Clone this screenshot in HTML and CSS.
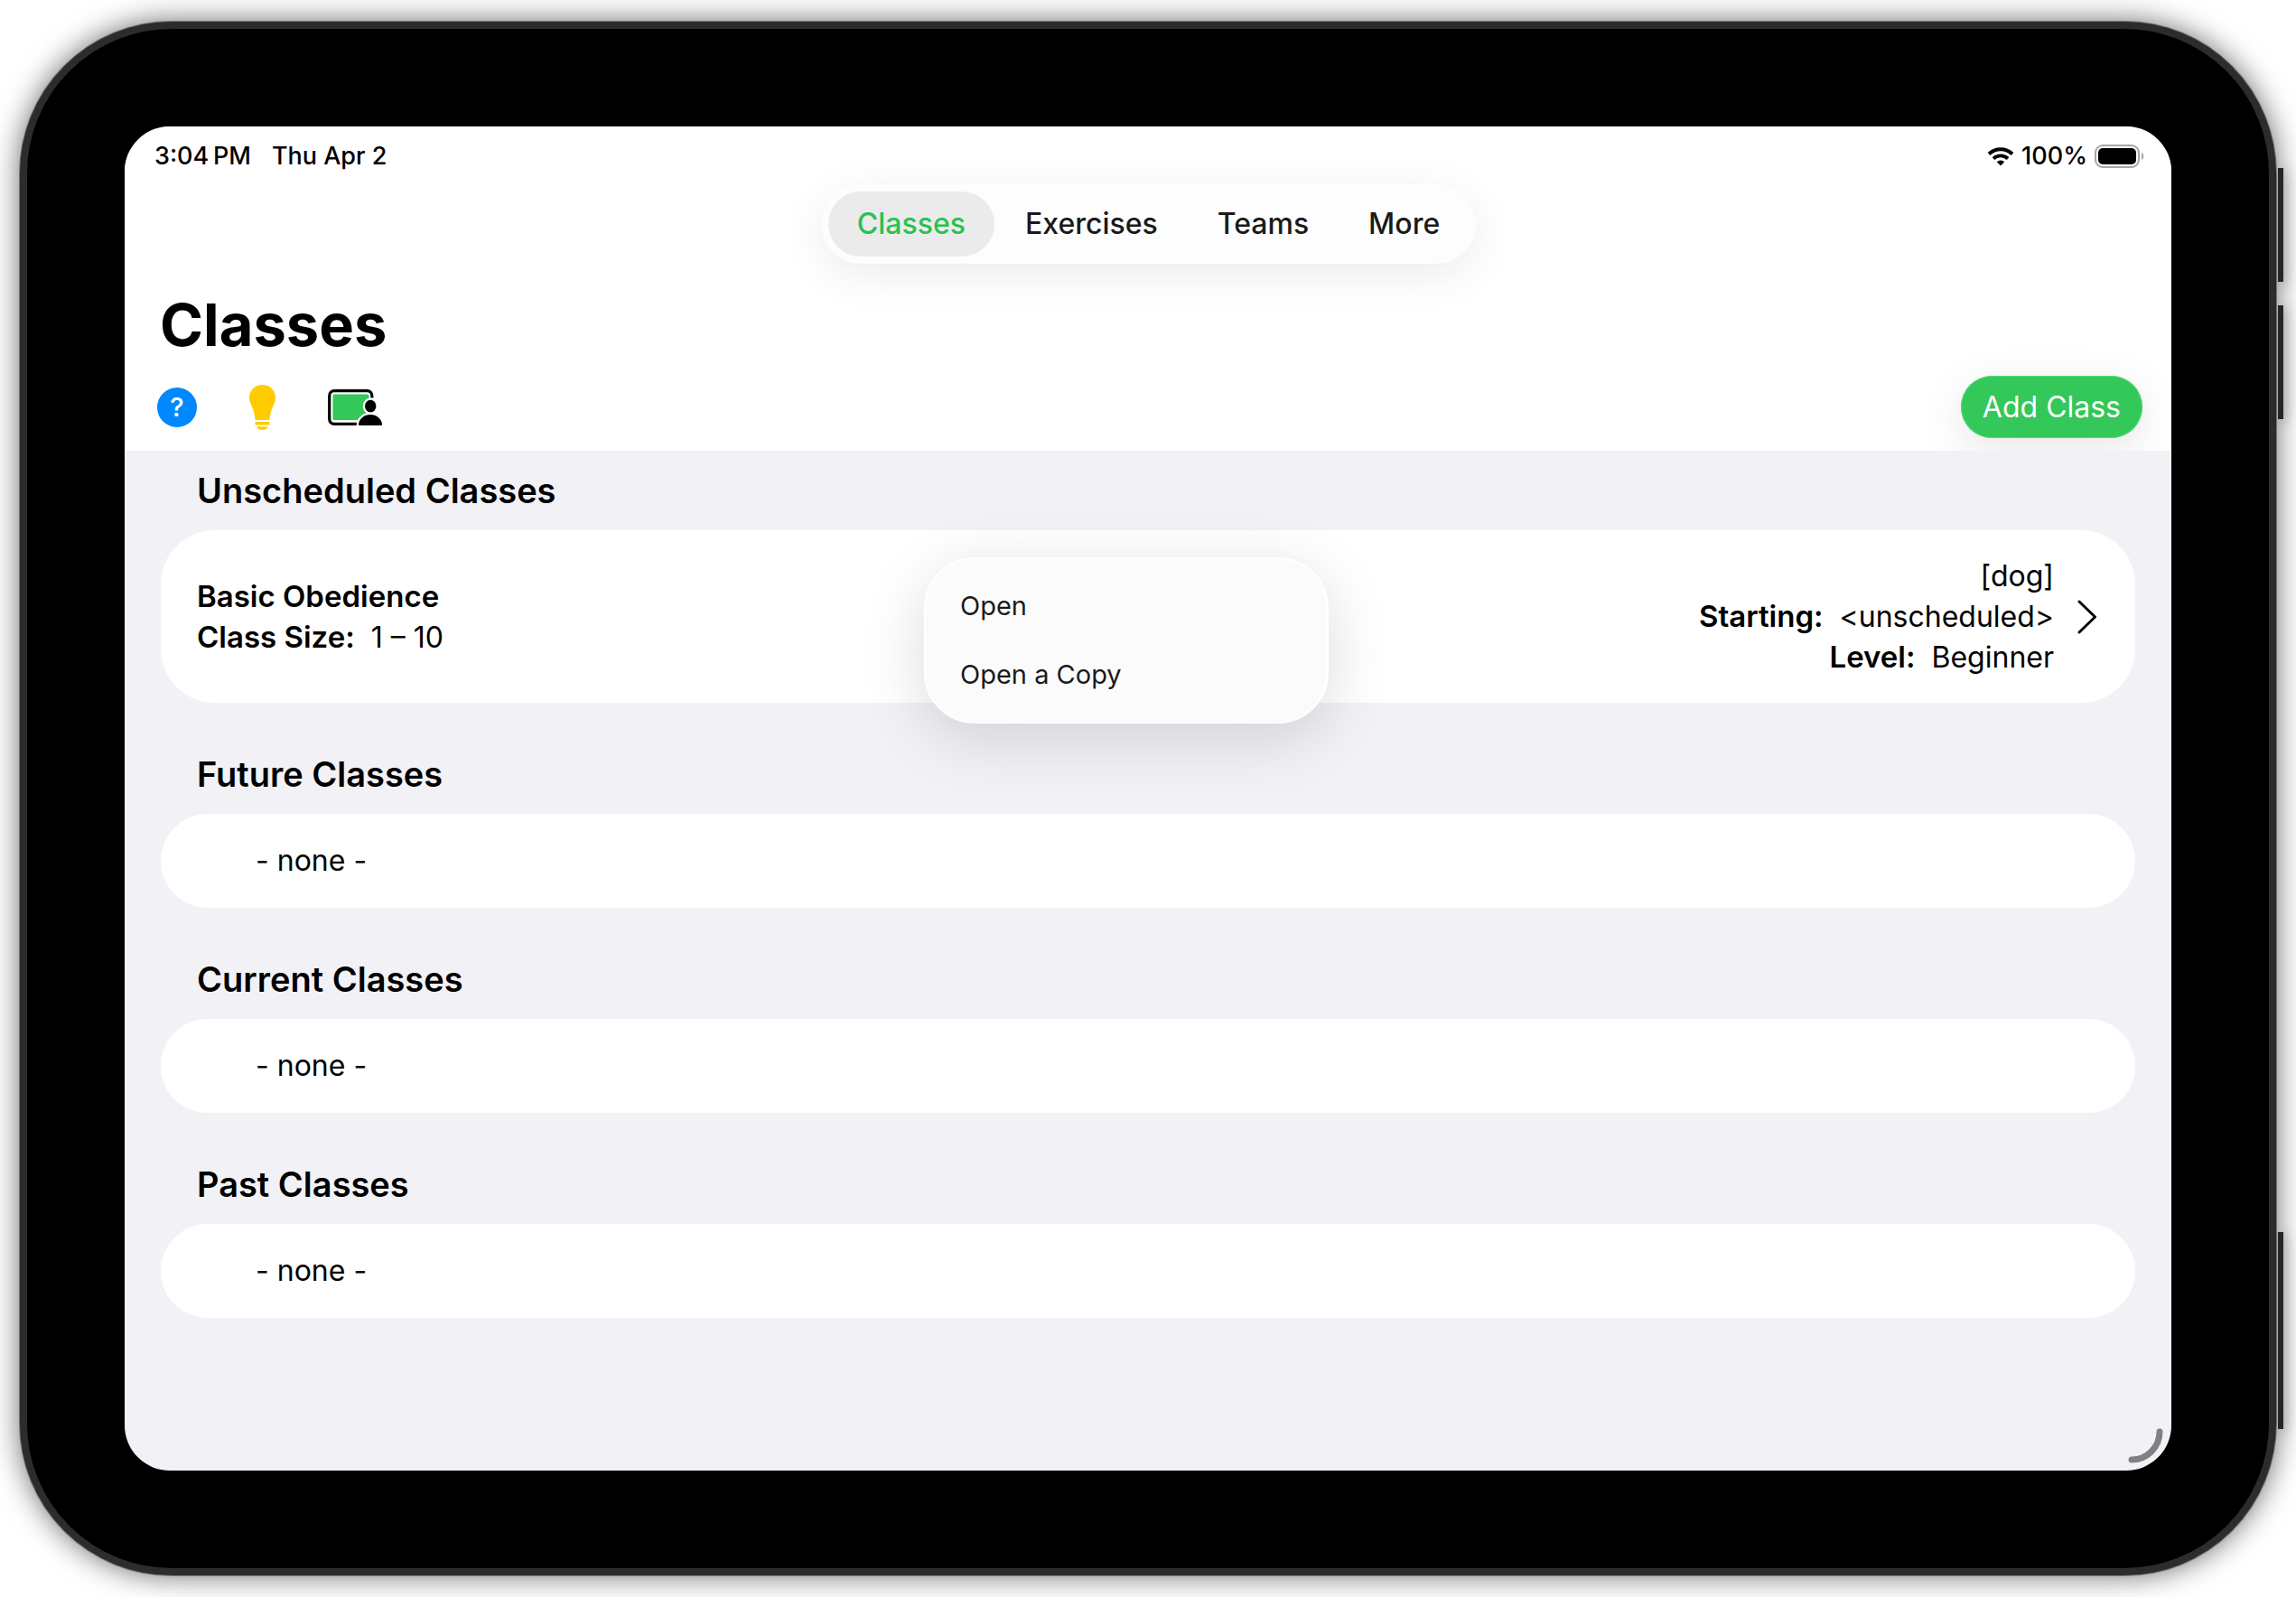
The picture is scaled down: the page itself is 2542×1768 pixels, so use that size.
FILE: index.html
```html
<!DOCTYPE html>
<html lang="en">
<head>
    <meta charset="UTF-8">
    <meta name="viewport" content="width=device-width, initial-scale=1.0">
    <title>Classes</title>
    <link rel="stylesheet" href="styles.css">
</head>
<body>
    <div class="device">
        <!-- Hardware buttons -->
        <span class="side-button volume-up"></span>
        <span class="side-button volume-down"></span>
        <span class="side-button power"></span>

        <div class="screen">
            <header class="header">
                <div class="status-bar">
                    <span>3:04&#8201;PM</span>
                    <span>Thu Apr 2</span>
                    <div class="status-right">
                        <svg class="wifi" viewBox="0 0 30 21" aria-hidden="true">
                            <path d="M2 7.5a18.5 18.5 0 0 1 26 0" fill="none" stroke="#000" stroke-width="4"/>
                            <path d="M7 12.7a11.5 11.5 0 0 1 16 0" fill="none" stroke="#000" stroke-width="3.8"/>
                            <path d="M15 20.5l-4.2-4.2a6 6 0 0 1 8.4 0z"/>
                        </svg>
                        <span>100%</span>
                        <svg class="battery" viewBox="0 0 56 26" aria-hidden="true">
                            <rect x="1" y="1" width="48" height="24" rx="8" fill="none" stroke="#a6a6a6" stroke-width="2"/>
                            <rect x="4" y="4" width="42" height="18" rx="5"/>
                            <path d="M52 9c3 1 3 7 0 8z" fill="#a6a6a6"/>
                        </svg>
                    </div>
                </div>

                <nav class="tabs">
                    <a class="tab active" href="#classes">Classes</a>
                    <a class="tab" href="#exercises">Exercises</a>
                    <a class="tab" href="#teams">Teams</a>
                    <a class="tab" href="#more">More</a>
                </nav>

                <h1>Classes</h1>

                <div class="toolbar">
                    <button class="icon-btn help" aria-label="Help">?</button>
                    <button class="icon-btn" aria-label="Tips">
                        <svg class="bulb" viewBox="0 0 29 50" fill="#ffcc02">
                            <path d="M14.5 0C22.6 0 29 6.2 29 14c0 8-5.600 11-6.600 25H6.600C5.600 25 0 22 0 14 0 6.200 6.400 0 14.500 0z"/>
                            <rect x="6.500" y="41" width="16" height="3.500" rx="1"/>
                            <path d="M8 46.200h13c-1 2.500-3.500 3.800-6.500 3.800S9 48.700 8 46.200z"/>
                        </svg>
                    </button>
                    <button class="icon-btn" aria-label="Present">
                        <svg class="present" viewBox="0 0 60 40">
                            <path d="M32 38.300H7a5.300 5.300 0 0 1-5.300-5.300V7A5.300 5.300 0 0 1 7 1.700h36.500a5.300 5.300 0 0 1 5.300 5.300v2.500" fill="none" stroke="#000" stroke-width="3.200"/>
                            <rect x="5.500" y="5.500" width="40" height="28.500" rx="1.500" fill="#34c759"/>
                            <g stroke="#fff" stroke-width="4.500" paint-order="stroke">
                                <ellipse cx="47.200" cy="18.700" rx="6.200" ry="6.900"/>
                                <path d="M35.500 40C34.500 40 34 39.500 34 38.500 34.500 33 40 28 47 28s12.500 5 13 10.500c0 1-.5 1.500-1.500 1.500z"/>
                            </g>
                        </svg>
                    </button>
                    <button class="add-btn">Add Class</button>
                </div>
            </header>

            <main class="content">
                <section>
                    <h2>Unscheduled Classes</h2>
                    <div class="card class-card">
                        <div class="class-info">
                            <p><strong>Basic Obedience</strong></p>
                            <p><strong>Class Size:</strong><span>1 – 10</span></p>
                        </div>
                        <div class="class-info details">
                            <p><span>[dog]</span></p>
                            <p><strong>Starting:</strong><span>&lt;unscheduled&gt;</span></p>
                            <p><strong>Level:</strong><span>Beginner</span></p>
                        </div>
                        <svg class="chevron" viewBox="0 0 22 38" aria-hidden="true">
                            <path d="M2 2l17.500 17L2 36" fill="none" stroke="#000" stroke-width="3" stroke-linecap="round" stroke-linejoin="round"/>
                        </svg>
                        <!-- Context menu for the row -->
                        <div class="menu">
                            <button>Open</button>
                            <button>Open a Copy</button>
                        </div>
                    </div>
                </section>
                <section>
                    <h2>Future Classes</h2>
                    <div class="card empty">- none -</div>
                </section>
                <section>
                    <h2>Current Classes</h2>
                    <div class="card empty">- none -</div>
                </section>
                <section>
                    <h2>Past Classes</h2>
                    <div class="card empty">- none -</div>
                </section>
            </main>

            <svg class="resize" viewBox="0 0 40 40" aria-hidden="true">
                <path d="M35 4a31 31 0 0 1-31 31" fill="none" stroke="#808080" stroke-width="7" stroke-linecap="round"/>
            </svg>
        </div>
    </div>
</body>
</html>
```
FILE: styles.css
```css
* {
    box-sizing: border-box;
}

body {
    font-family: Inter, "Liberation Sans", sans-serif;
    font-size: 32px;
    line-height: 45px;
    color: #000;
    background-color: #fff;
    margin: 0;
    padding: 24px 22px;
    min-height: 100vh;
    display: flex;
}

h1, h2, p {
    margin: 0;
}

button {
    font: inherit;
    border: none;
    background: none;
    padding: 0;
    cursor: pointer;
}

svg {
    display: block;
}

/* Tablet frame */
.device {
    flex: 1;
    display: flex;
    position: relative;
    padding: 108px;
    background-color: #000;
    border: 8px solid #2c2c2c;
    border-radius: 168px;
    box-shadow: 0 0 0 1px #777, 0 0 32px rgba(0, 0, 0, 0.6);
}

.side-button {
    position: absolute;
    left: calc(100% + 10px);
    width: 6px;
    height: 126px;
    background-color: #262626;
    box-shadow: 3px 3px 14px rgba(0, 0, 0, 0.3);
}

.volume-up {
    top: 154px;
}

.volume-down {
    top: 306px;
}

.power {
    bottom: 154px;
    height: 218px;
}

.screen {
    flex: 1;
    position: relative;
    background-color: #f2f1f6;
    border-radius: 50px;
    overflow: hidden;
}

/* Header */
.header {
    background-color: #fff;
    padding: 15px 32px 14px 33px;
    overflow: hidden;
}

.status-bar {
    display: flex;
    align-items: center;
    gap: 23px;
    padding-right: 4px;
    font-size: 27px;
    font-weight: 500;
    line-height: 36px;
}

.status-right {
    display: flex;
    align-items: center;
    gap: 8px;
    margin-left: auto;
    margin-right: -7px;
}

.wifi {
    width: 30px;
    height: 21px;
}

.battery {
    width: 56px;
    height: 26px;
}

.tabs {
    display: flex;
    gap: 2px;
    width: fit-content;
    margin: 13px auto 28px;
    padding: 8px;
    border-radius: 44px;
    background-color: #fdfdfd;
    box-shadow: 0 12px 50px rgba(0, 0, 0, 0.08);
}

.tab {
    padding: 0 32px;
    border-radius: 36px;
    font-weight: 500;
    line-height: 72px;
    color: #1a1a1a;
    text-decoration: none;
}

.tab.active {
    background-color: #ebebeb;
    color: #2cc052;
}

h1 {
    font-size: 65px;
    font-weight: 700;
    line-height: 80px;
    padding-left: 6px;
}

.toolbar {
    display: flex;
    align-items: center;
    gap: 58px;
    margin-top: 16px;
    padding-left: 3px;
}

.help {
    width: 44px;
    height: 44px;
    border-radius: 50%;
    background-color: #0088ff;
    color: #fff;
    font-weight: 500;
    font-size: 29px;
    line-height: 44px;
}

.bulb {
    width: 29px;
    height: 50px;
}

.present {
    width: 60px;
    height: 40px;
}

.add-btn {
    margin-left: auto;
    padding: 0 24px;
    border-radius: 35px;
    background-color: #34c759;
    box-shadow: inset 0 0 0 1px #4fdc74, 0 12px 50px rgba(0, 0, 0, 0.1);
    color: #fff;
    line-height: 69px;
}

/* Class lists */
.content {
    display: grid;
    gap: 35px;
    padding: 0 40px;
}

h2 {
    font-size: 38px;
    font-weight: 600;
    line-height: 60px;
    padding: 14px 40px;
}

.card {
    background-color: #fff;
    border-radius: 60px;
}

.class-card {
    position: relative;
    display: flex;
    align-items: center;
    padding: 28px 42px 28px 40px;
}

.class-info strong {
    font-size: 33px;
    font-weight: 600;
}

.class-info strong + span {
    margin-left: 18px;
}

.details {
    margin-left: auto;
    text-align: right;
}

.chevron {
    width: 22px;
    height: 38px;
    margin-left: 26px;
}

.empty {
    padding: 29px 105px;
    line-height: 46px;
}

.menu {
    position: absolute;
    top: 30px;
    left: calc(50% - 248px);
    width: 448px;
    padding: 14px 0;
    border-radius: 56px;
    border: 2px solid #fff;
    background-color: #fbfbfb;
    box-shadow: 0 16px 70px rgba(0, 0, 0, 0.14);
}

.menu button {
    display: block;
    width: 100%;
    padding: 0 38px;
    font-size: 29px;
    line-height: 76px;
    text-align: left;
    color: #1a1a1a;
}

.resize {
    position: absolute;
    right: 8px;
    bottom: 7px;
    width: 40px;
    height: 40px;
}
```
